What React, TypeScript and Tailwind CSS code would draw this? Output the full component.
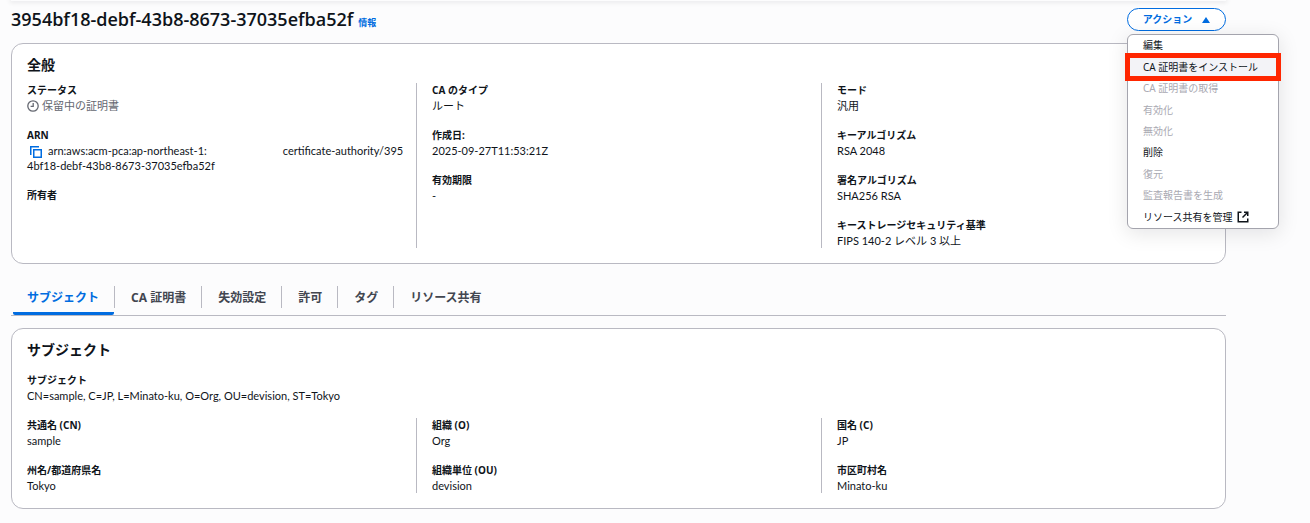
import { useState } from "react";

type Field = { label: string; value?: React.ReactNode };

const tabs = [
  { id: "subject", label: "サブジェクト" },
  { id: "certificate", label: "CA 証明書" },
  { id: "revocation", label: "失効設定" },
  { id: "permissions", label: "許可" },
  { id: "tags", label: "タグ" },
  { id: "sharing", label: "リソース共有" },
];

const actions = [
  { label: "編集" },
  { label: "CA 証明書をインストール", marked: true },
  { label: "CA 証明書の取得", disabled: true },
  { label: "有効化", disabled: true },
  { label: "無効化", disabled: true },
  { label: "削除" },
  { label: "復元", disabled: true },
  { label: "監査報告書を生成", disabled: true },
  { label: "リソース共有を管理", external: true },
];

function PendingIcon() {
  return (
    <svg className="size-3 shrink-0" viewBox="0 0 12 12" fill="none" stroke="currentColor" strokeWidth="1.3">
      <circle cx="6" cy="6" r="5.2" />
      <path d="M6.2 3v3.4H3.6" />
    </svg>
  );
}

function CopyIcon() {
  return (
    <svg className="size-3" viewBox="0 0 12 12" fill="none" stroke="currentColor" strokeWidth="1.5">
      <path d="M0.75 9V0.75H9" />
      <path d="M3.75 3.75h7.5v7.5h-7.5z" />
    </svg>
  );
}

function ExternalIcon() {
  return (
    <svg className="size-3" viewBox="0 0 12 12" fill="none" stroke="currentColor" strokeWidth="1.5">
      <path d="M4.5 1.25H1.25v9.5h9.5V7.5" />
      <path d="M7 1.25h3.75V5M10.75 1.25L5.5 6.5" />
    </svg>
  );
}

const generalColumns: Field[][] = [
  [
    {
      label: "ステータス",
      value: (
        <span className="flex items-center gap-[3px] text-[#656871]">
          <PendingIcon />
          保留中の証明書
        </span>
      ),
    },
    {
      label: "ARN",
      value: (
        <>
          <button type="button" aria-label="ARN をコピー" className="mr-[6px] ml-[3px] align-middle text-[#006ce0]">
            <CopyIcon />
          </button>
          arn:aws:acm-pca:ap-northeast-1:
          <span className="inline-block w-[76px]" />
          certificate-authority/395
          <br />
          4bf18-debf-43b8-8673-37035efba52f
        </>
      ),
    },
    { label: "所有者" },
  ],
  [
    { label: "CA のタイプ", value: "ルート" },
    { label: "作成日:", value: "2025-09-27T11:53:21Z" },
    { label: "有効期限", value: "-" },
  ],
  [
    { label: "モード", value: "汎用" },
    { label: "キーアルゴリズム", value: "RSA 2048" },
    { label: "署名アルゴリズム", value: "SHA256 RSA" },
    { label: "キーストレージセキュリティ基準", value: "FIPS 140-2 レベル 3 以上" },
  ],
];

const subjectColumns: Field[][] = [
  [
    { label: "共通名 (CN)", value: "sample" },
    { label: "州名/都道府県名", value: "Tokyo" },
  ],
  [
    { label: "組織 (O)", value: "Org" },
    { label: "組織単位 (OU)", value: "devision" },
  ],
  [
    { label: "国名 (C)", value: "JP" },
    { label: "市区町村名", value: "Minato-ku" },
  ],
];

function FieldItem({ label, value }: Field) {
  return (
    <div>
      <dt className="font-bold">{label}</dt>
      <dd className="font-['Lato','Noto_Sans_CJK_JP',sans-serif] text-[11px]">{value}</dd>
    </div>
  );
}

function FieldColumns({ columns }: { columns: Field[][] }) {
  return (
    <div className="grid grid-cols-3 gap-8">
      {columns.map((fields, i) => (
        <dl
          key={i}
          className={`flex flex-col gap-[15px] whitespace-nowrap ${i > 0 ? "-ml-4 border-l border-[#b9b9c2] pl-[15px]" : ""}`}
        >
          {fields.map((field) => (
            <FieldItem key={field.label} {...field} />
          ))}
        </dl>
      ))}
    </div>
  );
}

function ActionMenu() {
  const [open, setOpen] = useState(true);

  return (
    <div className="relative">
      <button
        type="button"
        aria-expanded={open}
        onClick={() => setOpen(!open)}
        className="flex h-[23px] w-[99px] items-center justify-center gap-[10px] rounded-full border border-[#006ce0] bg-white text-[10px] font-bold text-[#006ce0]"
      >
        アクション
        <svg className="h-[6px] w-2" viewBox="0 0 8 6" fill="currentColor">
          <path d="M4 0l4 6H0z" />
        </svg>
      </button>
      {open && (
        <ul className="absolute top-[26px] left-0 z-10 flex h-[195px] w-[152px] flex-col rounded-md border border-[#a4a4ad] bg-white shadow-[0_4px_20px_1px_rgba(0,7,22,0.10)]">
          {actions.map((action) => (
            <li key={action.label} className="relative flex flex-1">
              <button
                type="button"
                disabled={action.disabled}
                className={`flex flex-1 items-center gap-1 rounded-md px-[15px] text-left whitespace-nowrap disabled:text-[#a9a9b2] ${action.marked ? "bg-[#f3f3f7]" : ""}`}
              >
                {action.label}
                {action.external && <ExternalIcon />}
              </button>
              {action.marked && (
                <span className="pointer-events-none absolute -inset-[3px] border-5 border-[#ff2600]" />
              )}
            </li>
          ))}
        </ul>
      )}
    </div>
  );
}

export default function App() {
  const [activeTab, setActiveTab] = useState("subject");

  return (
    <div className="min-h-screen bg-[#fcfcfd] pr-[84px] pl-[11px] font-['Noto_Sans','Noto_Sans_CJK_JP',sans-serif] text-[10px] leading-[15px] text-[#0f141a]">
      <div className="-mb-px h-px shadow-[0_0_5px_1px_rgba(0,7,22,0.12)]" />

      {/* Title and actions */}
      <header className="flex items-start justify-between pt-2">
        <h1 className="flex items-baseline gap-[5px] font-['Open_Sans','Noto_Sans_CJK_JP',sans-serif] text-[18px] leading-[22px] font-semibold">
          3954bf18-debf-43b8-8673-37035efba52f
          <a href="#info" className="text-[9px] leading-3 font-bold text-[#006ce0]">
            情報
          </a>
        </h1>
        <ActionMenu />
      </header>

      <main className="pt-3">
        <section className="rounded-xl border border-[#b9b9c2] bg-white px-[15px] pt-[11px] pb-[15px]">
          <h2 className="mb-2 text-[14px] leading-5 font-bold">全般</h2>
          <FieldColumns columns={generalColumns} />
        </section>

        <div role="tablist" className="mt-[19px] flex h-[33px] border-b border-[#b9b9c2] pl-[2px]">
          {tabs.map((tab, i) => (
            <div key={tab.id} className="flex items-start">
              {i > 0 && <span className="mt-[3px] h-[22px] w-px bg-[#b9b9c2]" />}
              <button
                type="button"
                role="tab"
                aria-selected={activeTab === tab.id}
                onClick={() => setActiveTab(tab.id)}
                className={`h-8 border-b-3 pt-[2px] pb-[3px] text-[12px] font-bold whitespace-nowrap ${i === 0 ? "pr-[15px] pl-[14px]" : "pr-[15px] pl-4"} ${
                  activeTab === tab.id ? "rounded-b-xs border-[#006ce0] text-[#006ce0]" : "border-transparent text-[#424650]"
                }`}
              >
                {tab.label}
              </button>
            </div>
          ))}
        </div>

        <section className="mt-3 rounded-xl border border-[#b9b9c2] bg-white px-[15px] pt-[11px] pb-[15px]">
          <h2 className="mb-[13px] text-[14px] leading-5 font-bold">サブジェクト</h2>
          <dl className="mb-[15px]">
            <FieldItem label="サブジェクト" value="CN=sample, C=JP, L=Minato-ku, O=Org, OU=devision, ST=Tokyo" />
          </dl>
          <FieldColumns columns={subjectColumns} />
        </section>
      </main>
    </div>
  );
}
